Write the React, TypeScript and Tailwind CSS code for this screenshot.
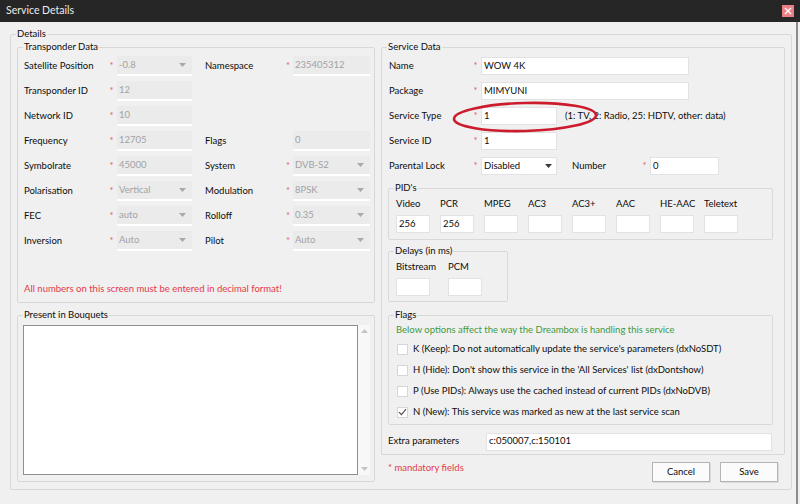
import React from "react";

type Kids = { children?: React.ReactNode };

function Arrow({ disabled }: { disabled?: boolean }) {
  return (
    <svg width="7" height="4" viewBox="0 0 7 4" className="shrink-0">
      <path d="M0 0h7L3.5 4z" fill={disabled ? "#a9a9a9" : "#3a3a3a"} />
    </svg>
  );
}

function Group({ label, className = "", children }: Kids & { label: string; className?: string }) {
  return (
    <fieldset className={`m-0 min-w-0 rounded-[2px] border border-[#d8d8d8] p-0 ${className}`}>
      <legend className="ml-[5px] px-[1px] leading-[12px]">{label}</legend>
      {children}
    </fieldset>
  );
}

function Star() {
  return <span className="text-[#e4606c]">*</span>;
}

// greyed-out transponder field
function Dis({ value, w, select }: { value: string; w: string; select?: boolean }) {
  return (
    <div className={`flex h-[20px] items-center border-b-2 border-white bg-[#ebebeb] pl-[2px] pr-[6px] text-[#a2a2a2] ${w}`}>
      <span className="flex-1">{value}</span>
      {select && <Arrow disabled />}
    </div>
  );
}

function Field({ value = "", w }: { value?: string; w: string }) {
  return (
    <div className={`flex h-[18px] items-center border border-[#e2e2e2] bg-white pl-[2px] ${w}`}>
      {value}
    </div>
  );
}

type Cell = { label: string; value: string; select?: boolean; star?: boolean };

const transponder: [Cell, Cell | null][] = [
  [{ label: "Satellite Position", value: "-0.8", select: true, star: true }, { label: "Namespace", value: "235405312", star: true }],
  [{ label: "Transponder ID", value: "12", star: true }, null],
  [{ label: "Network ID", value: "10", star: true }, null],
  [{ label: "Frequency", value: "12705", star: true }, { label: "Flags", value: "0" }],
  [{ label: "Symbolrate", value: "45000", star: true }, { label: "System", value: "DVB-S2", select: true, star: true }],
  [{ label: "Polarisation", value: "Vertical", select: true, star: true }, { label: "Modulation", value: "8PSK", select: true, star: true }],
  [{ label: "FEC", value: "auto", select: true, star: true }, { label: "Rolloff", value: "0.35", select: true, star: true }],
  [{ label: "Inversion", value: "Auto", select: true, star: true }, { label: "Pilot", value: "Auto", select: true, star: true }],
];

const pids = [
  { label: "Video", value: "256" },
  { label: "PCR", value: "256" },
  { label: "MPEG", value: "" },
  { label: "AC3", value: "" },
  { label: "AC3+", value: "" },
  { label: "AAC", value: "" },
  { label: "HE-AAC", value: "" },
  { label: "Teletext", value: "" },
];

const flags = [
  { text: "K (Keep): Do not automatically update the service's parameters (dxNoSDT)", on: false },
  { text: "H (Hide): Don't show this service in the 'All Services' list (dxDontshow)", on: false },
  { text: "P (Use PIDs): Always use the cached instead of current PIDs (dxNoDVB)", on: false },
  { text: "N (New): This service was marked as new at the last service scan", on: true },
];

function Check({ on }: { on: boolean }) {
  return (
    <div className="flex h-[11px] w-[11px] shrink-0 items-center justify-center border border-[#d6d6d6] bg-white">
      {on && (
        <svg width="9" height="8" viewBox="0 0 9 8">
          <path d="M1 4.2l2.4 2.4L8 1.2" fill="none" stroke="#4a4a4a" strokeWidth="1.1" />
        </svg>
      )}
    </div>
  );
}

function RightRow({ label, children }: Kids & { label: string }) {
  return (
    <div className="flex h-[20px] items-center pl-[1px]">
      <span className="w-[81px]">{label}</span>
      <span className="w-[11px] text-center">
        <Star />
      </span>
      {children}
    </div>
  );
}

export default function App() {
  return (
    <div className="relative flex h-[504px] w-[800px] flex-col overflow-hidden bg-[#f0f0f0] font-['Lato',sans-serif] text-[9.5px] text-[#0c0c0c]">
      {/* title bar */}
      <div className="flex h-[22px] shrink-0 items-center bg-[#262626] pl-[6px] text-[10.5px] text-[#ececec]">
        <span>Service Details</span>
        <div className="ml-auto mr-[6px] flex h-[12px] w-[12px] items-center justify-center bg-[#ea7f88]">
          <svg width="8" height="8" viewBox="0 0 8 8">
            <path d="M1 1l6 6M7 1L1 7" stroke="#fff" strokeWidth="1.4" />
          </svg>
        </div>
      </div>

      <div className="flex flex-1">
        <div className="w-[796px] pl-[10px] pr-[4px] pt-[6px]">
          <Group label="Details">
            <div className="flex gap-[6px] px-[6px] pb-[7px]">
              {/* left column */}
              <div className="flex w-[358px] flex-col">
                <Group label="Transponder Data" className="mt-[1px]">
                  <div className="pb-[7px] pl-[6px] pr-[4px] pt-[3px]">
                    <div className="flex flex-col gap-[5px]">
                      {transponder.map(([a, b], i) => (
                        <div key={i} className="flex h-[20px] items-center">
                          <span className="w-[82px]">{a.label}</span>
                          <span className="w-[11px] text-center">{a.star && <Star />}</span>
                          <Dis value={a.value} select={a.select} w="w-[75px]" />
                          <span className="w-[13px]" />
                          {b && (
                            <>
                              <span className="w-[78px]">{b.label}</span>
                              <span className="w-[10px] text-center">{b.star && <Star />}</span>
                              <Dis value={b.value} select={b.select} w="w-[77px]" />
                            </>
                          )}
                        </div>
                      ))}
                    </div>
                    <p className="mt-[32px] leading-[12px] text-[#e5394a]">
                      All numbers on this screen must be entered in decimal format!
                    </p>
                  </div>
                </Group>

                <Group label="Present in Bouquets" className="mt-[6px]">
                  <div className="flex pb-[6px] pl-[5px] pr-[4px] pt-[4px]">
                    <div className="h-[150px] w-[335px] border border-[#8f8f8f] bg-white" />
                    <div className="flex h-[150px] w-[12px] flex-col items-center justify-between bg-[#f8f8f8] py-[4px]">
                      <svg width="7" height="4" viewBox="0 0 7 4">
                        <path d="M0 4h7L3.5 0z" fill="#c4c4c4" />
                      </svg>
                      <svg width="7" height="4" viewBox="0 0 7 4">
                        <path d="M0 0h7L3.5 4z" fill="#c4c4c4" />
                      </svg>
                    </div>
                  </div>
                </Group>
              </div>

              {/* right column */}
              <div className="flex w-[404px] flex-col">
                <Group label="Service Data" className="mt-[1px]">
                  <div className="pb-[3px] pl-[6px] pr-[11px] pt-[3px]">
                    <div className="flex flex-col gap-[5px]">
                      <RightRow label="Name">
                        <Field value="WOW 4K" w="w-[208px]" />
                      </RightRow>
                      <RightRow label="Package">
                        <Field value="MIMYUNI" w="w-[208px]" />
                      </RightRow>
                      <RightRow label="Service Type">
                        <Field value="1" w="w-[76px]" />
                        <span className="ml-[8px]">(1: TV, 2: Radio, 25: HDTV, other: data)</span>
                      </RightRow>
                      <RightRow label="Service ID">
                        <Field value="1" w="w-[76px]" />
                      </RightRow>
                      <RightRow label="Parental Lock">
                        <div className="flex h-[18px] w-[76px] items-center border border-[#e2e2e2] bg-white pl-[2px] pr-[4px]">
                          <span className="flex-1">Disabled</span>
                          <Arrow />
                        </div>
                        <span className="ml-[15px] w-[67px]">Number</span>
                        <span className="w-[11px] text-center">
                          <Star />
                        </span>
                        <Field value="0" w="w-[69px]" />
                      </RightRow>
                    </div>

                    <Group label="PID's" className="mt-[6px]">
                      <div className="flex gap-[10px] pb-[6px] pl-[7px] pt-[4px]">
                        {pids.map((p) => (
                          <div key={p.label} className="flex w-[34px] flex-col">
                            <span className="whitespace-nowrap leading-[12px]">{p.label}</span>
                            <div className="mt-[5px]">
                              <Field value={p.value} w="w-[34px]" />
                            </div>
                          </div>
                        ))}
                      </div>
                    </Group>

                    <Group label="Delays (in ms)" className="mt-[5px] w-[120px]">
                      <div className="flex gap-[18px] pb-[5px] pl-[7px] pt-[4px]">
                        {["Bitstream", "PCM"].map((l) => (
                          <div key={l} className="flex w-[34px] flex-col">
                            <span className="whitespace-nowrap leading-[12px]">{l}</span>
                            <div className="mt-[5px]">
                              <Field w="w-[34px]" />
                            </div>
                          </div>
                        ))}
                      </div>
                    </Group>

                    <Group label="Flags" className="mt-[7px]">
                      <div className="pb-[5px] pl-[7px] pt-[3px]">
                        <p className="leading-[12px] text-[#3d9a3f]">
                          Below options affect the way the Dreambox is handling this service
                        </p>
                        <div className="mt-[6px] flex flex-col gap-[7px]">
                          {flags.map((f) => (
                            <div key={f.text} className="flex h-[14px] items-center gap-[5px] pl-[1px]">
                              <Check on={f.on} />
                              <span className="whitespace-nowrap">{f.text}</span>
                            </div>
                          ))}
                        </div>
                      </div>
                    </Group>

                    <div className="mt-[7px] flex h-[19px] items-center">
                      <span className="w-[98px]">Extra parameters</span>
                      <Field value="c:050007,c:150101" w="w-[286px]" />
                    </div>
                  </div>
                </Group>

                <div className="mt-[7px] flex items-start justify-between px-[7px]">
                  <span className="leading-[12px] text-[#e5394a]">* mandatory fields</span>
                  <div className="flex gap-[10px]">
                    <button className="h-[20px] w-[58px] border border-[#b4b4b4] bg-[#fbfbfb] shadow-[1px_1px_0_#dcdcdc]">
                      Cancel
                    </button>
                    <button className="h-[20px] w-[58px] border border-[#b4b4b4] bg-[#fbfbfb] shadow-[1px_1px_0_#dcdcdc]">
                      Save
                    </button>
                  </div>
                </div>
              </div>
            </div>
          </Group>
        </div>
        <div className="w-[2px] bg-[#8c8c8c]" />
      </div>

      {/* hand-drawn highlight around the service type field */}
      <svg className="pointer-events-none absolute left-[451px] top-[101px]" width="150" height="32" viewBox="0 0 150 32">
        <ellipse cx="74" cy="16" rx="71" ry="14" fill="none" stroke="#cc1b2c" strokeWidth="2.6" transform="rotate(-1.5 74 16)" />
      </svg>
    </div>
  );
}
